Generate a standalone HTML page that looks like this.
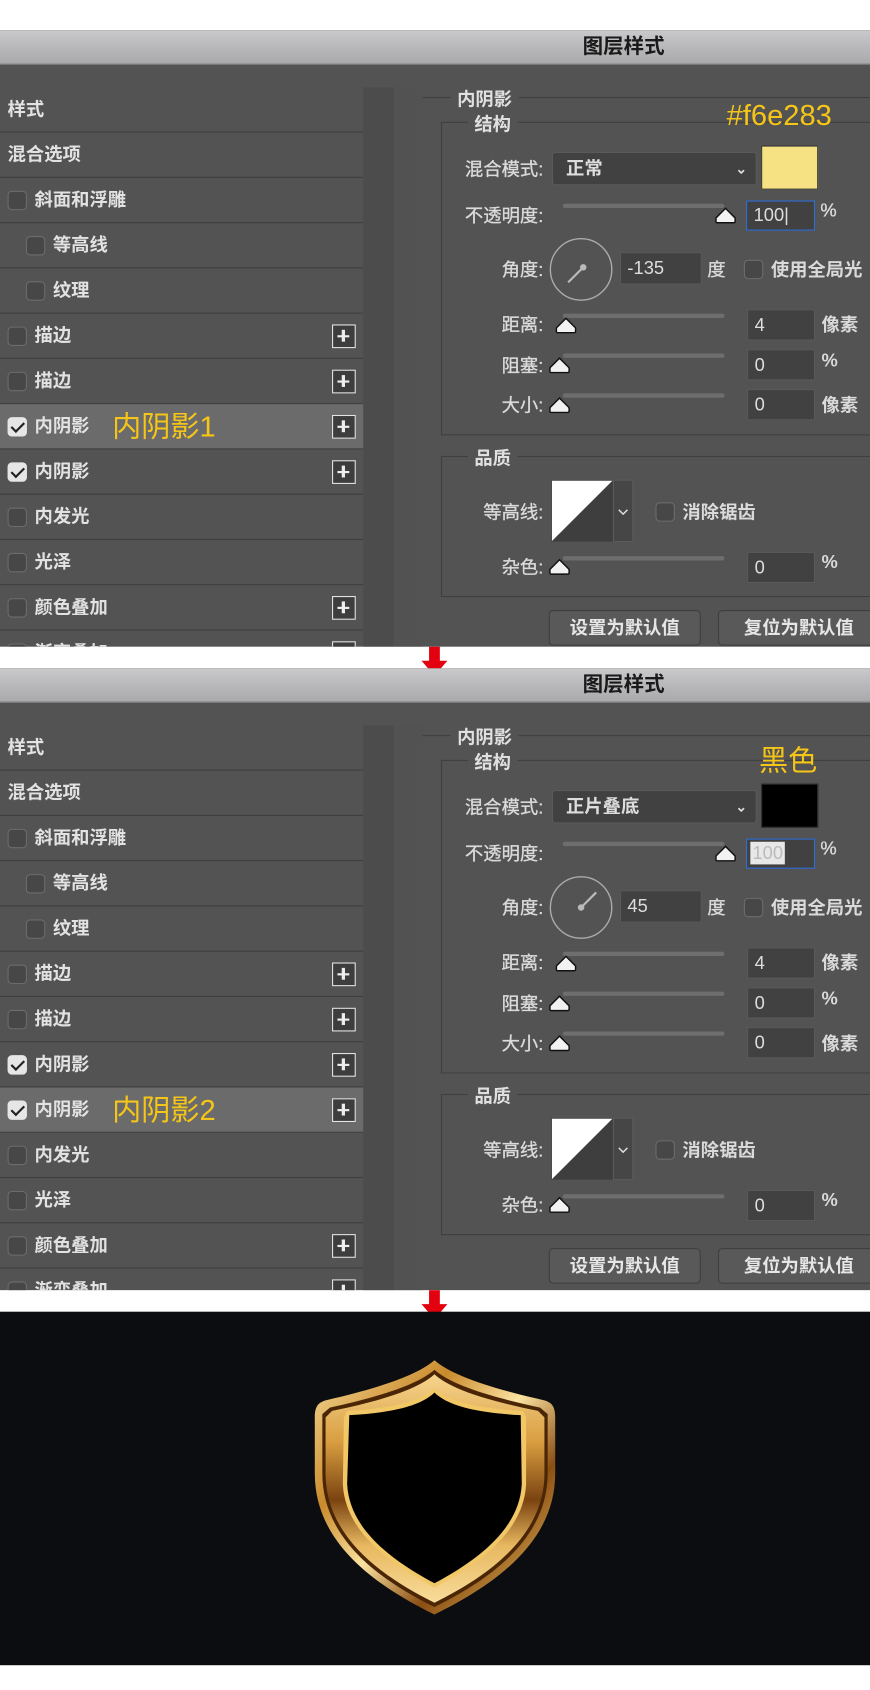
<!DOCTYPE html>
<html><head><meta charset="utf-8"><style>
*{margin:0;padding:0;box-sizing:border-box}
html,body{width:870px;height:1690px;overflow:hidden;background:#fff}
#w{position:absolute;left:0;top:0;width:807px;height:1568px;transform-origin:0 0;transform:scale(1.07807,1.07781);font-family:"Liberation Sans","Noto Sans CJK SC",sans-serif;color:#ddd}
.panel{position:absolute;left:0;width:807px;height:580px;background:#535353;overflow:hidden}
.title{position:absolute;left:0;top:0;width:807px;height:32px;background:linear-gradient(#c9c9cb,#a9a9ab);border-bottom:1px solid #8a8a8a;color:#1a1a1a;font-size:19px;font-weight:bold;text-align:center;line-height:32px;padding-left:350px}
.list{position:absolute;left:0;top:53px;width:337px;height:540px}
.row{position:absolute;left:0;width:337px;height:42px;border-bottom:1px solid #3e3e3e;font-size:17px;font-weight:bold;line-height:42px;color:#e2e2e2}
.row.hl{background:#6b6b6b}
.cb{position:absolute;top:12px;width:18px;height:18px;border:1px solid #6c6c6c;border-radius:4px;background:#474747}
.cb.on{background:#e6e6e6;border-color:#e6e6e6}
.cb.on:after{content:"";position:absolute;left:5px;top:1px;width:5px;height:10px;border:solid #222;border-width:0 2.5px 2.5px 0;transform:rotate(45deg)}
.plus{position:absolute;left:308px;top:10px;width:22px;height:22px;border:1.5px solid #e6e6e6;background:#3d3d3d}
.plus:before{content:"";position:absolute;left:4px;top:8.5px;width:11px;height:2.5px;background:#eee}
.plus:after{content:"";position:absolute;left:8.3px;top:4px;width:2.5px;height:11px;background:#eee}
.gap{position:absolute;left:337px;top:53px;width:28px;height:540px;background:#4c4c4c}
.gl{position:absolute;left:365px;top:53px;width:27px;height:540px;background:#525252}
.lbl{position:absolute;font-size:17px;color:#dadada;white-space:nowrap;margin-top:-3px;-webkit-text-stroke:0.3px #dadada}
.b{font-weight:bold;-webkit-text-stroke:0}
.fs{position:absolute;border:1px solid #3f3f3f;border-right:none}
.leg{position:absolute;background:#535353;padding:0 6px;font-size:17px;font-weight:bold;color:#e0e0e0}
.inp{position:absolute;background:#414141;border:1px solid #5a5a5a;font-size:17px;color:#ddd;padding-left:6px;line-height:28px}
.track{position:absolute;height:4px;background:#6e6e6e;border-radius:2px}
.thumb{position:absolute;width:20px;height:16px}
.btn{position:absolute;top:538px;height:33px;background:#595959;border:1px solid #3e3e3e;border-radius:4px;font-size:17px;font-weight:bold;text-align:center;line-height:31px;color:#e6e6e6}
.y{position:absolute;color:#f5c518;font-size:27px;white-space:nowrap}
.arrow{position:absolute;left:391px;width:24px;height:28px}
</style></head><body><div id="w">

<!-- PANEL 1 -->
<div class="panel" style="top:28px;height:572px">
 <div class="title">图层样式</div>
 <div class="list">
  <div class="row" style="top:0"><span style="margin-left:7px">样式</span></div>
  <div class="row" style="top:42px"><span style="margin-left:7px">混合选项</span></div>
  <div class="row" style="top:84px"><div class="cb" style="left:7px"></div><span style="margin-left:32px">斜面和浮雕</span></div>
  <div class="row" style="top:126px"><div class="cb" style="left:24px"></div><span style="margin-left:49px">等高线</span></div>
  <div class="row" style="top:168px"><div class="cb" style="left:24px"></div><span style="margin-left:49px">纹理</span></div>
  <div class="row" style="top:210px"><div class="cb" style="left:7px"></div><span style="margin-left:32px">描边</span><div class="plus"></div></div>
  <div class="row" style="top:252px"><div class="cb" style="left:7px"></div><span style="margin-left:32px">描边</span><div class="plus"></div></div>
  <div class="row hl" style="top:294px"><div class="cb on" style="left:7px"></div><span style="margin-left:32px">内阴影</span><span class="y" style="left:104px;top:0;line-height:42px;font-weight:normal">内阴影1</span><div class="plus"></div></div>
  <div class="row" style="top:336px"><div class="cb on" style="left:7px"></div><span style="margin-left:32px">内阴影</span><div class="plus"></div></div>
  <div class="row" style="top:378px"><div class="cb" style="left:7px"></div><span style="margin-left:32px">内发光</span></div>
  <div class="row" style="top:420px"><div class="cb" style="left:7px"></div><span style="margin-left:32px">光泽</span></div>
  <div class="row" style="top:462px"><div class="cb" style="left:7px"></div><span style="margin-left:32px">颜色叠加</span><div class="plus"></div></div>
  <div class="row" style="top:504px"><div class="cb" style="left:7px"></div><span style="margin-left:32px">渐变叠加</span><div class="plus"></div></div>
 </div>
 <div class="gap"></div><div class="gl"></div>
 <div class="fs" style="left:392px;top:62px;width:420px;height:520px;border-left:none;border-bottom:none"></div>
 <div class="leg" style="left:418px;top:50px">内阴影</div>
 <div class="fs" style="left:409px;top:85px;width:400px;height:291px"></div>
 <div class="leg" style="left:434px;top:73px">结构</div>
 <div class="y" style="left:674px;top:64px">#f6e283</div>
 <div class="lbl" style="right:303px;top:118px">混合模式:</div>
 <div class="inp" style="left:512px;top:113px;width:190px;height:31px;border-radius:3px;padding-left:12px;line-height:29px;font-weight:bold">正常<span style="position:absolute;right:8px;top:0;font-size:13px">&#8964;</span></div>
 <div style="position:absolute;left:706px;top:107px;width:53px;height:41px;background:#f6e283;border:1px solid #333"></div>
 <div class="lbl" style="right:303px;top:161px">不透明度:</div>
 <div class="track" style="left:522px;top:161px;width:150px"></div>
 <svg class="thumb" style="left:663px;top:164px" viewBox="0 0 18 14"><path d="M9 1 L17 9 V12 Q17 13 16 13 H2 Q1 13 1 12 V9 Z" fill="#f2f2f2" stroke="#111" stroke-width="1.2"/></svg>
 <div class="inp" style="left:692px;top:158px;width:64px;height:28px;border:1.5px solid #2d6fd8;line-height:25px">100|</div>
 <div class="lbl" style="left:761px;top:161px">%</div>
 <div class="lbl" style="right:303px;top:211px">角度:</div>
 <svg style="position:absolute;left:509px;top:192px" width="60" height="60"><circle cx="30" cy="30" r="28.5" fill="none" stroke="#aaa" stroke-width="1.3"/><line x1="18" y1="42" x2="32" y2="28" stroke="#bbb" stroke-width="2"/><circle cx="32" cy="28" r="3" fill="#bbb"/></svg>
 <div class="inp" style="left:575px;top:206px;width:76px;height:30px">-135</div>
 <div class="lbl" style="left:656px;top:211px">度</div>
 <div class="cb" style="left:690px;top:213px"></div>
 <div class="lbl b" style="left:715px;top:211px">使用全局光</div>
 <div class="lbl" style="right:303px;top:262px">距离:</div>
 <div class="track" style="left:522px;top:263px;width:150px"></div>
 <svg class="thumb" style="left:515px;top:266px" viewBox="0 0 18 14"><path d="M9 1 L17 9 V12 Q17 13 16 13 H2 Q1 13 1 12 V9 Z" fill="#f2f2f2" stroke="#111" stroke-width="1.2"/></svg>
 <div class="inp" style="left:693px;top:259px;width:63px;height:29px">4</div>
 <div class="lbl b" style="left:762px;top:262px">像素</div>
 <div class="lbl" style="right:303px;top:300px">阻塞:</div>
 <div class="track" style="left:522px;top:300px;width:150px"></div>
 <svg class="thumb" style="left:509px;top:303px" viewBox="0 0 18 14"><path d="M9 1 L17 9 V12 Q17 13 16 13 H2 Q1 13 1 12 V9 Z" fill="#f2f2f2" stroke="#111" stroke-width="1.2"/></svg>
 <div class="inp" style="left:693px;top:296px;width:63px;height:29px">0</div>
 <div class="lbl b" style="left:762px;top:300px">%</div>
 <div class="lbl" style="right:303px;top:337px">大小:</div>
 <div class="track" style="left:522px;top:337px;width:150px"></div>
 <svg class="thumb" style="left:509px;top:340px" viewBox="0 0 18 14"><path d="M9 1 L17 9 V12 Q17 13 16 13 H2 Q1 13 1 12 V9 Z" fill="#f2f2f2" stroke="#111" stroke-width="1.2"/></svg>
 <div class="inp" style="left:693px;top:333px;width:63px;height:29px">0</div>
 <div class="lbl b" style="left:762px;top:337px">像素</div>
 <div class="fs" style="left:409px;top:395px;width:400px;height:131px"></div>
 <div class="leg" style="left:434px;top:383px">品质</div>
 <div class="lbl" style="right:303px;top:436px">等高线:</div>
 <svg style="position:absolute;left:511px;top:417px" width="77" height="58"><rect x="0.5" y="0.5" width="57" height="57" fill="#3e3e3e"/><polygon points="1,57 57,1 1,1" fill="#fff"/><rect x="58" y="0.5" width="18" height="57" fill="#464646" stroke="#5c5c5c"/><path d="M63 28 l4 4 l4 -4" fill="none" stroke="#ddd" stroke-width="1.4"/></svg>
 <div class="cb" style="left:608px;top:438px"></div>
 <div class="lbl b" style="left:633px;top:436px">消除锯齿</div>
 <div class="lbl" style="right:303px;top:487px">杂色:</div>
 <div class="track" style="left:522px;top:488px;width:150px"></div>
 <svg class="thumb" style="left:509px;top:490px" viewBox="0 0 18 14"><path d="M9 1 L17 9 V12 Q17 13 16 13 H2 Q1 13 1 12 V9 Z" fill="#f2f2f2" stroke="#111" stroke-width="1.2"/></svg>
 <div class="inp" style="left:693px;top:484px;width:63px;height:29px">0</div>
 <div class="lbl b" style="left:762px;top:487px">%</div>
 <div class="btn" style="left:509px;width:141px">设置为默认值</div>
 <div class="btn" style="left:666px;width:150px">复位为默认值</div>
</div>
<svg class="arrow" style="top:600px" viewBox="0 0 24 28"><path d="M7 0 H17 V13 H24 L12 27 L0 13 H7 Z" fill="#e3000f"/></svg>

<!-- PANEL 2 -->
<div class="panel" style="top:620px;height:577px">
 <div class="title">图层样式</div>
 <div class="list">
  <div class="row" style="top:0"><span style="margin-left:7px">样式</span></div>
  <div class="row" style="top:42px"><span style="margin-left:7px">混合选项</span></div>
  <div class="row" style="top:84px"><div class="cb" style="left:7px"></div><span style="margin-left:32px">斜面和浮雕</span></div>
  <div class="row" style="top:126px"><div class="cb" style="left:24px"></div><span style="margin-left:49px">等高线</span></div>
  <div class="row" style="top:168px"><div class="cb" style="left:24px"></div><span style="margin-left:49px">纹理</span></div>
  <div class="row" style="top:210px"><div class="cb" style="left:7px"></div><span style="margin-left:32px">描边</span><div class="plus"></div></div>
  <div class="row" style="top:252px"><div class="cb" style="left:7px"></div><span style="margin-left:32px">描边</span><div class="plus"></div></div>
  <div class="row" style="top:294px"><div class="cb on" style="left:7px"></div><span style="margin-left:32px">内阴影</span><div class="plus"></div></div>
  <div class="row hl" style="top:336px"><div class="cb on" style="left:7px"></div><span style="margin-left:32px">内阴影</span><span class="y" style="left:104px;top:0;line-height:42px;font-weight:normal">内阴影2</span><div class="plus"></div></div>
  <div class="row" style="top:378px"><div class="cb" style="left:7px"></div><span style="margin-left:32px">内发光</span></div>
  <div class="row" style="top:420px"><div class="cb" style="left:7px"></div><span style="margin-left:32px">光泽</span></div>
  <div class="row" style="top:462px"><div class="cb" style="left:7px"></div><span style="margin-left:32px">颜色叠加</span><div class="plus"></div></div>
  <div class="row" style="top:504px"><div class="cb" style="left:7px"></div><span style="margin-left:32px">渐变叠加</span><div class="plus"></div></div>
 </div>
 <div class="gap"></div><div class="gl"></div>
 <div class="fs" style="left:392px;top:62px;width:420px;height:520px;border-left:none;border-bottom:none"></div>
 <div class="leg" style="left:418px;top:50px">内阴影</div>
 <div class="fs" style="left:409px;top:85px;width:400px;height:291px"></div>
 <div class="leg" style="left:434px;top:73px">结构</div>
 <div class="y" style="left:704px;top:64px">黑色</div>
 <div class="lbl" style="right:303px;top:118px">混合模式:</div>
 <div class="inp" style="left:512px;top:113px;width:190px;height:31px;border-radius:3px;padding-left:12px;line-height:29px;font-weight:bold">正片叠底<span style="position:absolute;right:8px;top:0;font-size:13px">&#8964;</span></div>
 <div style="position:absolute;left:706px;top:107px;width:53px;height:41px;background:#000;border:1px solid #333"></div>
 <div class="lbl" style="right:303px;top:161px">不透明度:</div>
 <div class="track" style="left:522px;top:161px;width:150px"></div>
 <svg class="thumb" style="left:663px;top:164px" viewBox="0 0 18 14"><path d="M9 1 L17 9 V12 Q17 13 16 13 H2 Q1 13 1 12 V9 Z" fill="#f2f2f2" stroke="#111" stroke-width="1.2"/></svg>
 <div class="inp" style="left:692px;top:158px;width:64px;height:28px;border:1.5px solid #2d6fd8;line-height:25px;padding-left:3px"><span style="background:#e8e8e8;color:#bbb;padding:1px 2px">100</span></div>
 <div class="lbl" style="left:761px;top:161px">%</div>
 <div class="lbl" style="right:303px;top:211px">角度:</div>
 <svg style="position:absolute;left:509px;top:192px" width="60" height="60"><circle cx="30" cy="30" r="28.5" fill="none" stroke="#aaa" stroke-width="1.3"/><line x1="30" y1="30" x2="44" y2="16" stroke="#bbb" stroke-width="2"/><circle cx="30" cy="30" r="3" fill="#bbb"/></svg>
 <div class="inp" style="left:575px;top:206px;width:76px;height:30px">45</div>
 <div class="lbl" style="left:656px;top:211px">度</div>
 <div class="cb" style="left:690px;top:213px"></div>
 <div class="lbl b" style="left:715px;top:211px">使用全局光</div>
 <div class="lbl" style="right:303px;top:262px">距离:</div>
 <div class="track" style="left:522px;top:263px;width:150px"></div>
 <svg class="thumb" style="left:515px;top:266px" viewBox="0 0 18 14"><path d="M9 1 L17 9 V12 Q17 13 16 13 H2 Q1 13 1 12 V9 Z" fill="#f2f2f2" stroke="#111" stroke-width="1.2"/></svg>
 <div class="inp" style="left:693px;top:259px;width:63px;height:29px">4</div>
 <div class="lbl b" style="left:762px;top:262px">像素</div>
 <div class="lbl" style="right:303px;top:300px">阻塞:</div>
 <div class="track" style="left:522px;top:300px;width:150px"></div>
 <svg class="thumb" style="left:509px;top:303px" viewBox="0 0 18 14"><path d="M9 1 L17 9 V12 Q17 13 16 13 H2 Q1 13 1 12 V9 Z" fill="#f2f2f2" stroke="#111" stroke-width="1.2"/></svg>
 <div class="inp" style="left:693px;top:296px;width:63px;height:29px">0</div>
 <div class="lbl b" style="left:762px;top:300px">%</div>
 <div class="lbl" style="right:303px;top:337px">大小:</div>
 <div class="track" style="left:522px;top:337px;width:150px"></div>
 <svg class="thumb" style="left:509px;top:340px" viewBox="0 0 18 14"><path d="M9 1 L17 9 V12 Q17 13 16 13 H2 Q1 13 1 12 V9 Z" fill="#f2f2f2" stroke="#111" stroke-width="1.2"/></svg>
 <div class="inp" style="left:693px;top:333px;width:63px;height:29px">0</div>
 <div class="lbl b" style="left:762px;top:337px">像素</div>
 <div class="fs" style="left:409px;top:395px;width:400px;height:131px"></div>
 <div class="leg" style="left:434px;top:383px">品质</div>
 <div class="lbl" style="right:303px;top:436px">等高线:</div>
 <svg style="position:absolute;left:511px;top:417px" width="77" height="58"><rect x="0.5" y="0.5" width="57" height="57" fill="#3e3e3e"/><polygon points="1,57 57,1 1,1" fill="#fff"/><rect x="58" y="0.5" width="18" height="57" fill="#464646" stroke="#5c5c5c"/><path d="M63 28 l4 4 l4 -4" fill="none" stroke="#ddd" stroke-width="1.4"/></svg>
 <div class="cb" style="left:608px;top:438px"></div>
 <div class="lbl b" style="left:633px;top:436px">消除锯齿</div>
 <div class="lbl" style="right:303px;top:487px">杂色:</div>
 <div class="track" style="left:522px;top:488px;width:150px"></div>
 <svg class="thumb" style="left:509px;top:490px" viewBox="0 0 18 14"><path d="M9 1 L17 9 V12 Q17 13 16 13 H2 Q1 13 1 12 V9 Z" fill="#f2f2f2" stroke="#111" stroke-width="1.2"/></svg>
 <div class="inp" style="left:693px;top:484px;width:63px;height:29px">0</div>
 <div class="lbl b" style="left:762px;top:487px">%</div>
 <div class="btn" style="left:509px;width:141px">设置为默认值</div>
 <div class="btn" style="left:666px;width:150px">复位为默认值</div>
</div>
<svg class="arrow" style="top:1197px" viewBox="0 0 24 28"><path d="M7 0 H17 V13 H24 L12 27 L0 13 H7 Z" fill="#e3000f"/></svg>

<!-- shield -->
<div style="position:absolute;left:0;top:1217px;width:807px;height:328px;background:#0c0d11">
<svg width="807" height="328" viewBox="0 0 807 328" style="position:absolute;left:0;top:0">
 <defs>
  <linearGradient id="g1" x1="0" y1="0" x2="1" y2="1">
   <stop offset="0" stop-color="#f8dc9a"/><stop offset="0.3" stop-color="#c98a2c"/><stop offset="0.5" stop-color="#fbe2a0"/><stop offset="0.7" stop-color="#8a4e12"/><stop offset="1" stop-color="#f0c86a"/>
  </linearGradient>
  <linearGradient id="g3" x1="0" y1="0" x2="0" y2="1">
   <stop offset="0" stop-color="#f6d58e"/><stop offset="0.3" stop-color="#d89d40"/><stop offset="0.55" stop-color="#7a4310"/><stop offset="0.75" stop-color="#e7b860"/><stop offset="1" stop-color="#f8dc9a"/>
  </linearGradient>
 </defs>
 <path d="M403 45 C388 58 355 70 303 82 C295 84 292 88 292 98 L292 150 C292 210 340 250 403 281 C466 250 515 210 515 150 L515 98 C515 88 512 84 504 82 C451 70 418 58 403 45 Z" fill="url(#g1)"/>
 <path d="M403 54 C388 67 356 78 306 89 L299 95 L299 150 C299 206 344 245 403 274 C462 245 508 206 508 150 L508 95 L501 89 C450 78 418 67 403 54 Z" fill="#4a2606"/>
 <path d="M403 58 C389 71 357 82 308 92 L302 98 L302 150 C302 204 346 242 403 270 C460 242 505 204 505 150 L505 98 L499 92 C449 82 417 71 403 58 Z" fill="url(#g3)"/>
 <path d="M403 71 C390 84 360 90 322 92 L319 98 L318 160 C320 202 358 232 403 256 C448 232 486 202 488 160 L488 98 L485 92 C446 90 416 84 403 71 Z" fill="#f2c766"/>
 <path d="M403 75 C390 88 361 94 324 96 L322 160 C324 200 360 229 403 252 C446 229 482 200 484 160 L483 96 C445 94 416 88 403 75 Z" fill="#000"/>
</svg>
</div>
</div></body></html>
